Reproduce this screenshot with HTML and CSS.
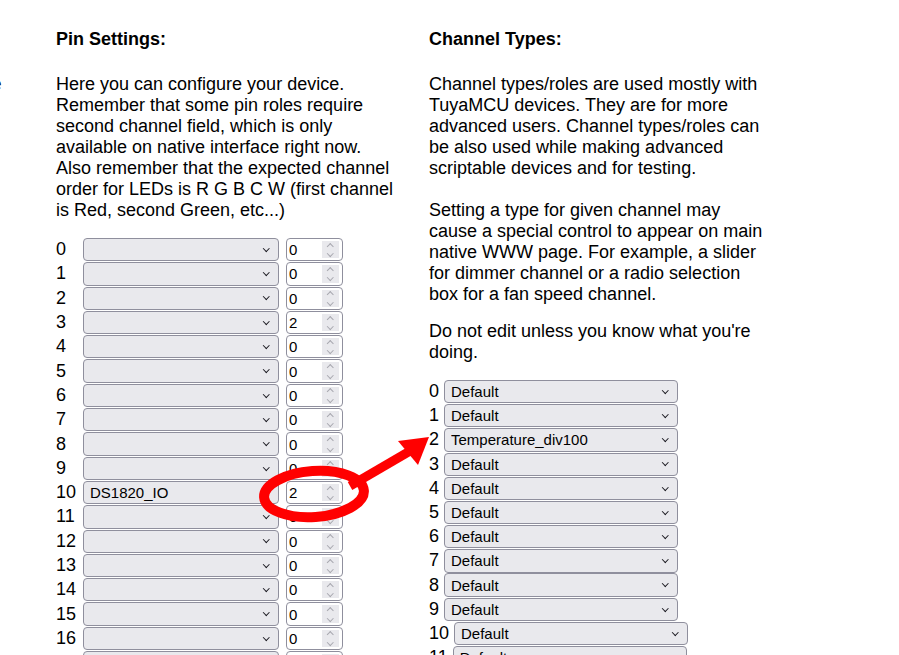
FILE: index.html
```html
<!DOCTYPE html>
<html lang="en">
<head>
  <meta charset="UTF-8">
  <meta name="viewport" content="width=device-width, initial-scale=1.0">
  <title>Configure Module</title>
  <link rel="stylesheet" href="styles.css">
</head>
<body>
  <div class="page">
    <section class="col col-prev">
      <p>You can change the name of the device shown in the title of the page.</p>
    </section>

    <section class="col">
      <h4>Pin Settings:</h4>
      <p>Here you can configure your device. Remember that some pin roles require second channel field, which is only available on native interface right now. Also remember that the expected channel order for LEDs is R G B C W (first channel is Red, second Green, etc...)</p>
      <div class="pins" id="pins"></div>
    </section>

    <section class="col">
      <h4>Channel Types:</h4>
      <p class="tight">Channel types/roles are used mostly with TuyaMCU devices. They are for more advanced users. Channel types/roles can be also used while making advanced scriptable devices and for testing.<br><br>Setting a type for given channel may cause a special control to appear on main native WWW page. For example, a slider for dimmer channel or a radio selection box for a fan speed channel.</p>
      <p class="warn">Do not edit unless you know what you're doing.</p>
      <div class="chans" id="chans"></div>
    </section>
  </div>

  <svg class="mark" width="899" height="655" viewBox="0 0 899 655">
    <ellipse cx="314" cy="494" rx="50" ry="23" fill="none" stroke="#f00" stroke-width="10" transform="rotate(-4 314 494)"/>
    <line x1="350" y1="486" x2="410" y2="451" stroke="#f00" stroke-width="9"/>
    <polygon points="398,441 429,437 418,465" fill="#f00"/>
  </svg>

  <script>
    const pins = document.getElementById('pins');
    const chans = document.getElementById('chans');

    // pin index -> [role, channel]
    const pinRoles = { 3: ['', 2], 10: ['DS1820_IO', 2] };
    const chanTypes = { 2: 'Temperature_div100' };

    for (let i = 0; i < 18; i++) {
      const [role, ch] = pinRoles[i] || ['', 0];
      const row = document.createElement('div');
      row.className = 'pin-row';
      row.innerHTML =
        '<span class="idx">' + i + '</span>' +
        '<span class="pick"><select><option>' + role + '</option></select></span>' +
        '<span class="num"><input type="text" value="' + ch + '"><span class="spin"></span></span>';
      pins.appendChild(row);
    }

    for (let i = 0; i < 12; i++) {
      const row = document.createElement('div');
      row.className = 'chan-row';
      row.innerHTML =
        '<span class="idx">' + i + '</span>' +
        '<span class="pick"><select><option>' + (chanTypes[i] || 'Default') + '</option></select></span>';
      chans.appendChild(row);
    }
  </script>
</body>
</html>
```

FILE: styles.css
```css
body {
  font-family: "Liberation Sans", Arial, sans-serif;
  font-size: 18px;
  line-height: 21px;
  color: #000;
  background: #fff;
  margin: 0;
  overflow: hidden;
}
.page {
  display: flex;
  gap: 30px;
  margin-left: -317px;
  padding-top: 29px;
}
.col {
  width: 343px;
  flex: none;
}
.col-prev {
  padding-left: 3px;
  width: 340px;
}
.col h4 {
  margin: 0;
  font-size: 18px;
  font-weight: bold;
}
.col p {
  margin: 24px 0 17px;
}
.col-prev p {
  margin-top: 45px;
}
.col p.tight {
  margin-bottom: 16px;
}
.col p.warn {
  margin: 0 0 17px;
}
.pins, .chans {
  display: flex;
  flex-direction: column;
  gap: 1px;
}
.pin-row {
  display: flex;
  align-items: center;
  height: 23.3px;
}
.pin-row .idx {
  width: 27px;
}
.pin-row .pick {
  width: 196px;
}
.chan-row {
  display: flex;
  align-items: center;
  gap: 5px;
  height: 23.2px;
}
.pick {
  display: flex;
  align-items: center;
  height: 23.3px;
  box-sizing: border-box;
  background: #e9e9ed;
  border: 1px solid #8f8f9d;
  border-radius: 4px;
}
.chan-row .pick {
  width: 234px;
}
.pick select {
  appearance: none;
  -webkit-appearance: none;
  flex: 1;
  min-width: 0;
  border: none;
  background: transparent;
  font-family: "Liberation Sans", Arial, sans-serif;
  font-size: 15px;
  color: #000;
  padding: 0 0 0 6px;
  height: 100%;
  outline: none;
}
.pick::after {
  content: "";
  width: 3.5px;
  height: 3.5px;
  border-right: 1.8px solid #1c1b22;
  border-bottom: 1.8px solid #1c1b22;
  transform: rotate(45deg);
  margin: -3px 10px 0 6px;
}
.num {
  display: flex;
  align-items: stretch;
  width: 57px;
  margin-left: 7px;
  height: 23.3px;
  box-sizing: border-box;
  background: #fff;
  border: 1px solid #8f8f9d;
  border-radius: 4px;
  padding: 2px 3px 2px 2px;
}
.num input {
  flex: 1;
  min-width: 0;
  border: none;
  padding: 0;
  font-family: "Liberation Sans", Arial, sans-serif;
  font-size: 15px;
  color: #000;
  background: transparent;
  outline: none;
}
.spin {
  width: 17px;
  flex: none;
  background: #e9e9ed;
  display: flex;
  flex-direction: column;
  align-items: center;
  justify-content: center;
  gap: 3px;
}
.spin::before, .spin::after {
  content: "";
  width: 3.5px;
  height: 3.5px;
  border-color: #a8a8b0;
  border-style: solid;
  border-width: 0;
  transform: rotate(45deg);
}
.spin::before {
  border-left-width: 1.3px;
  border-top-width: 1.3px;
  margin-top: 2px;
}
.spin::after {
  border-right-width: 1.3px;
  border-bottom-width: 1.3px;
  margin-bottom: 2px;
}
.mark {
  position: absolute;
  left: 0;
  top: 0;
  pointer-events: none;
}
```
